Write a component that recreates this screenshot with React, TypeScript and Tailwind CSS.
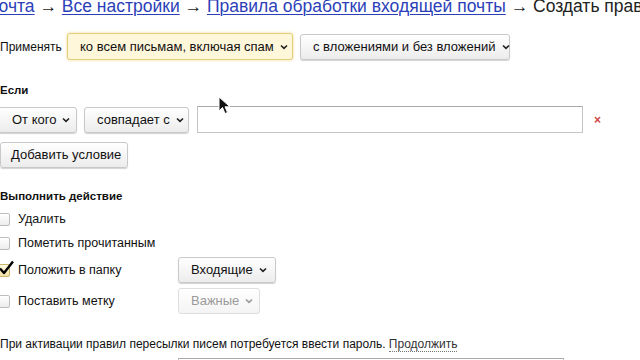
import React from "react";

const Chevron = ({ light = false }: { light?: boolean }) => (
  <svg width="8" height="6" viewBox="0 0 8 6" className="shrink-0">
    <path d="M1 1.5 L4 4.4 L7 1.5" fill="none" stroke={light ? "#9a9a9a" : "#222"} strokeWidth="1.6" />
  </svg>
);

const Btn = ({
  children,
  chevron = true,
  className = "",
  light = false,
}: {
  children: React.ReactNode;
  chevron?: boolean;
  className?: string;
  light?: boolean;
}) => (
  <div
    className={
      "h-[26px] shrink-0 flex items-center gap-[6px] rounded-[3px] border text-[13px] whitespace-nowrap " +
      className
    }
  >
    <span className={light ? "text-[#9a9a9a]" : "text-[#111]"}>{children}</span>
    {chevron && <Chevron light={light} />}
  </div>
);

const normal =
  "border-[#c9c9c9] bg-gradient-to-b from-white to-[#ececec] shadow-[0_1px_1px_rgba(0,0,0,0.18)]";

const Check = ({ checked = false }: { checked?: boolean }) => (
  <div className="relative -ml-[3px] w-[13px] h-[13px] shrink-0">
    <div
      className={
        "w-[13px] h-[13px] rounded-[2px] border " +
        (checked
          ? "border-[#c9b46a] bg-gradient-to-b from-[#fffbe5] to-[#f3e3a3]"
          : "border-[#bdbdbd] bg-gradient-to-b from-white to-[#ececec]")
      }
    />
    {checked && (
      <svg width="17" height="16" viewBox="0 0 17 16" className="absolute left-[1px] -top-[4px]">
        <path d="M2 8.5 L6 13 L15 1.5" fill="none" stroke="#000" strokeWidth="2.4" strokeLinejoin="round" />
      </svg>
    )}
  </div>
);

export default function App() {
  return (
    <div
      className="relative w-[640px] h-[360px] overflow-hidden bg-white text-[#111]"
      style={{ fontFamily: '"Liberation Sans", Arial, sans-serif' }}
    >
      <div className="-mt-[5px] -ml-[14px] text-[17.5px] leading-[22px] whitespace-nowrap">
        <span className="text-[#2c3fb8] underline decoration-1 underline-offset-[2px]">Почта</span>
        <span className="text-[#222]"> → </span>
        <span className="text-[#2c3fb8] underline decoration-1 underline-offset-[2px]">Все настройки</span>
        <span className="text-[#222]"> → </span>
        <span className="text-[#2c3fb8] underline decoration-1 underline-offset-[2px]">
          Правила обработки входящей почты
        </span>
        <span className="text-[#222]"> → Создать правило</span>
      </div>

      <div className="mt-[16px] flex items-center">
        <span className="text-[12px] w-[67px] shrink-0">Применять</span>
        <Btn className="w-[226px] h-[27px] pl-[12px] border-[#e6cf7a] bg-[#fff7d9] shadow-[0_0_3px_rgba(228,196,90,0.7)]">
          ко всем письмам, включая спам
        </Btn>
        <Btn className={"ml-[7px] w-[210px] pl-[12px] " + normal}>с вложениями и без вложений</Btn>
      </div>

      <div className="mt-[22px] text-[11.5px] leading-[16px] font-bold">Если</div>

      <div className="mt-[8px] flex items-center">
        <Btn className={"-ml-[2px] w-[79px] pl-[13px] " + normal}>От кого</Btn>
        <Btn className={"ml-[7px] w-[105px] pl-[12px] " + normal}>совпадает с</Btn>
        <div className="ml-[8px] w-[386px] h-[27px] border border-[#c4c4c4] border-t-[#a9a9a9] bg-white" />
        <span className="ml-[11px] text-[#d24545] text-[12px] font-bold leading-none">×</span>
      </div>

      <div className="mt-[9px] flex">
        <Btn chevron={false} className={"w-[128px] pl-[10px] " + normal}>
          Добавить условие
        </Btn>
      </div>

      <div className="mt-[20px] text-[11.5px] leading-[16px] font-bold">Выполнить действие</div>

      <div className="mt-[5px] h-[20px] flex items-center gap-[8px] text-[12.5px]">
        <Check />
        <span>Удалить</span>
      </div>
      <div className="mt-[4px] h-[20px] flex items-center gap-[8px] text-[12.5px]">
        <Check />
        <span>Пометить прочитанным</span>
      </div>
      <div className="mt-[4px] h-[26px] flex items-center text-[12.5px]">
        <Check checked />
        <span className="ml-[8px] w-[160px]">Положить в папку</span>
        <Btn className={"w-[98px] pl-[12px] " + normal}>Входящие</Btn>
      </div>
      <div className="mt-[5px] h-[26px] flex items-center text-[12.5px]">
        <Check />
        <span className="ml-[8px] w-[160px]">Поставить метку</span>
        <Btn light className="w-[82px] pl-[12px] border-[#dedede] bg-gradient-to-b from-white to-[#f4f4f4]">
          Важные
        </Btn>
      </div>

      <div className="mt-[22px] text-[12px] leading-[16px] whitespace-nowrap">
        При активации правил пересылки писем потребуется ввести пароль.{" "}
        <span className="text-[#333] border-b border-dotted border-[#777]">Продолжить</span>
      </div>

      <div className="mt-[6px] ml-[178px] w-[386px] h-[27px] border border-[#c4c4c4] border-t-[#a9a9a9] bg-white" />

      <svg
        width="14"
        height="20"
        viewBox="0 0 14 20"
        className="absolute left-[218px] top-[96px]"
      >
        <path
          d="M1 1 L1 15 L4.5 11.5 L7 17.5 L9.5 16.5 L7 10.8 L12 10.8 Z"
          fill="#111"
          stroke="#fff"
          strokeWidth="1"
          strokeLinejoin="round"
        />
      </svg>
    </div>
  );
}
